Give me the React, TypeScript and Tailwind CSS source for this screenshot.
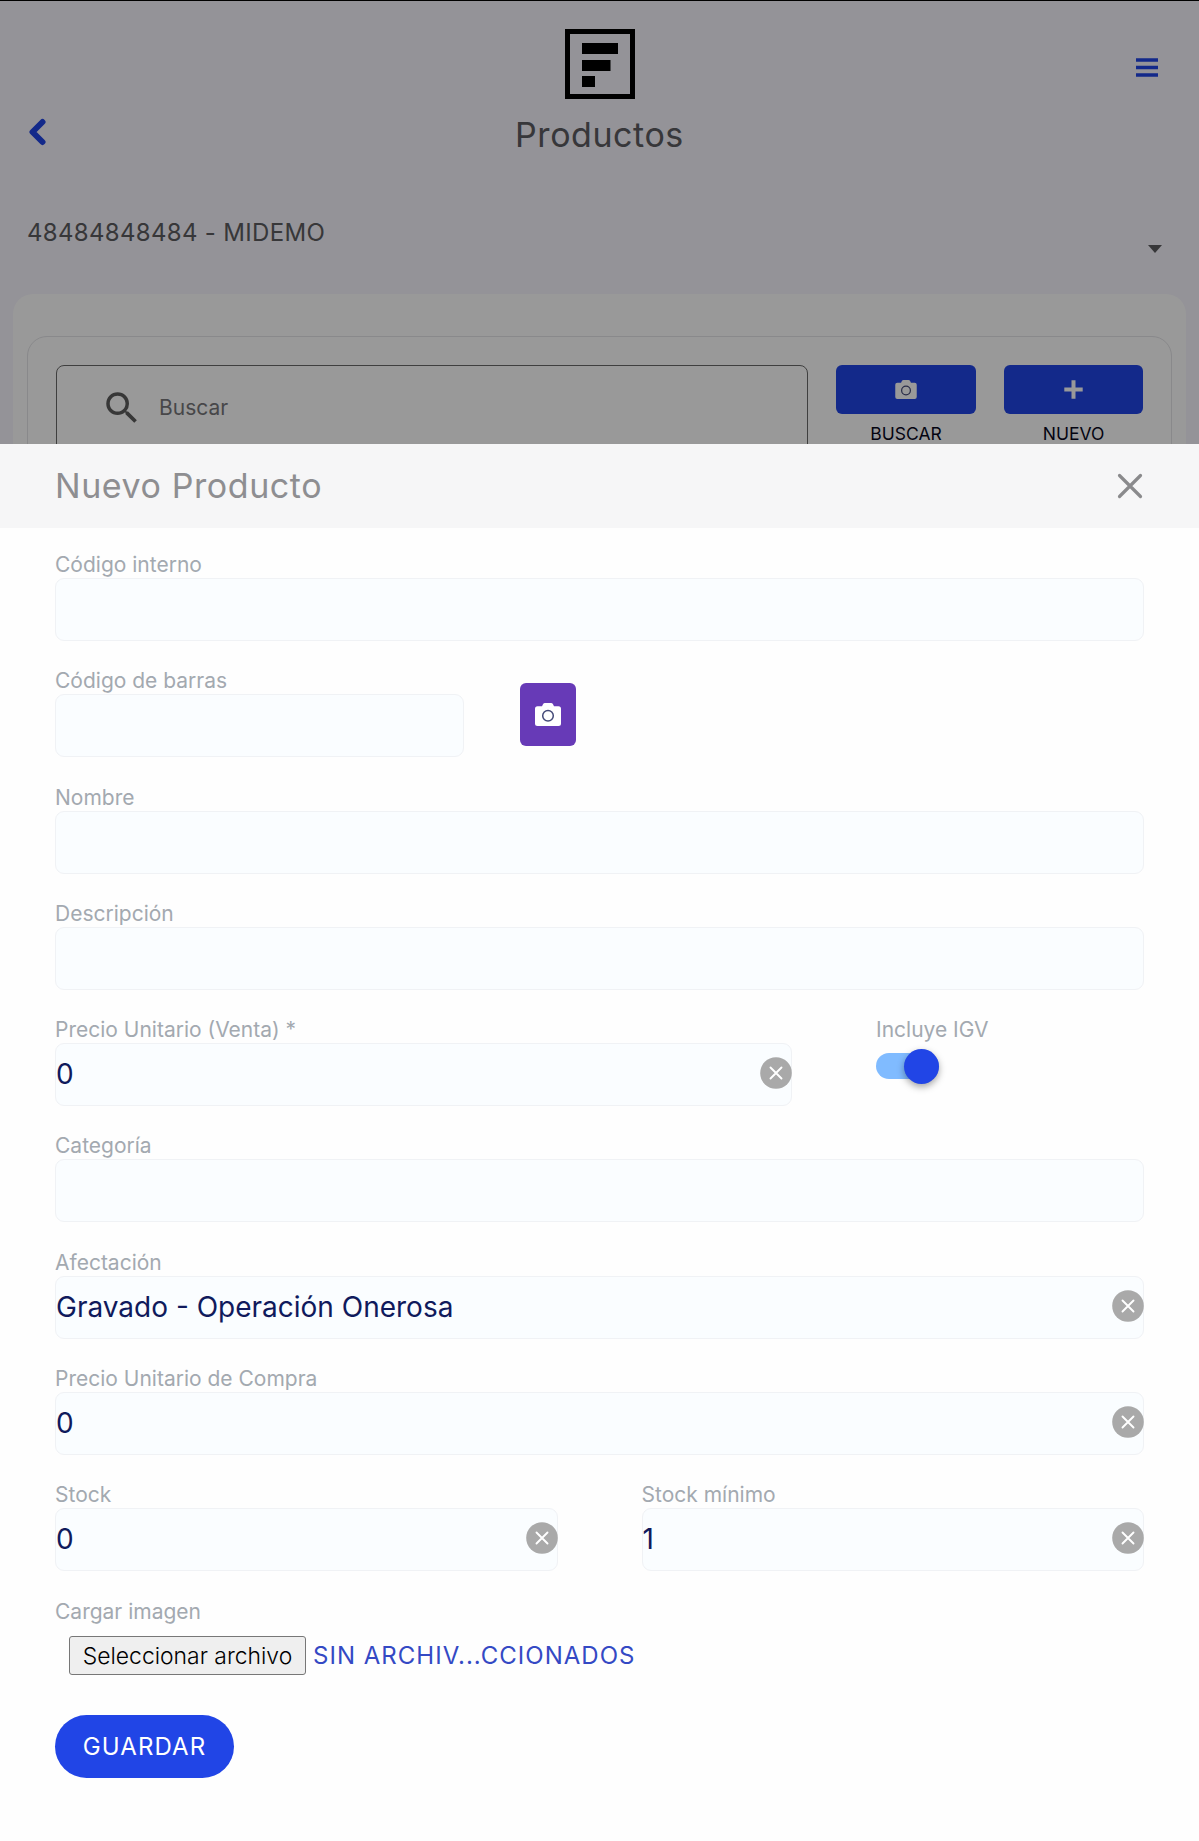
import React from "react";

type IconProps = { className?: string };

function Logo() {
  return (
    <svg className="h-[70px] w-[70px]" viewBox="0 0 70 70" fill="#000">
      <path d="M0 0H70V70H0ZM5 5V65H65V5Z" fillRule="evenodd" />
      <path d="M17 14H53V25H17ZM17 31H45.500V42H17ZM17 47H30V58H17Z" />
    </svg>
  );
}

function BackIcon() {
  return (
    <svg className="h-[28px] w-[20px]" viewBox="0 0 20 28" fill="none" stroke="#2145e6" strokeWidth="6" strokeLinecap="round" strokeLinejoin="round">
      <path d="M14.500 4L4.500 14L14.500 24" />
    </svg>
  );
}

function MenuIcon() {
  return (
    <svg className="h-[19px] w-[22px]" viewBox="0 0 22 19" fill="#2145e6">
      <path d="M0 0.300H22V3.700H0ZM0 7.800H22V11.200H0ZM0 15.300H22V18.700H0Z" />
    </svg>
  );
}

function CameraIcon({ className }: IconProps) {
  return (
    <svg className={className} viewBox="0 0 26 23" fill="none">
      <path d="M2.500 3.200H7L8 1.200Q8.600 0 10 0H16Q17.400 0 18 1.200L19 3.200H23.500Q26 3.200 26 5.700V20.500Q26 23 23.500 23H2.500Q0 23 0 20.500V5.700Q0 3.200 2.500 3.200Z" fill="#fff" />
      <circle cx="13" cy="12.800" r="5.300" stroke="#444a78" strokeWidth="1.500" />
    </svg>
  );
}

function PlusIcon() {
  return (
    <svg className="h-[19px] w-[19px]" viewBox="0 0 19 19" stroke="#fff" strokeWidth="4" strokeLinecap="butt">
      <path d="M9.500 0.300V18.700M0.300 9.500H18.700" />
    </svg>
  );
}

function SearchIcon() {
  return (
    <svg className="h-[42px] w-[42px]" viewBox="0 0 24 24" fill="#5c5c5c">
      <path d="M15.500 14h-.79l-.28-.27A6.471 6.471 0 0 0 16 9.500 6.500 6.500 0 1 0 9.500 16c1.610 0 3.090-.59 4.230-1.570l.27.28v.79l5 4.990L20.490 19l-4.990-5zm-6 0C7.010 14 5 11.990 5 9.500S7.010 5 9.500 5 14 7.010 14 9.500 11.990 14 9.500 14z" />
    </svg>
  );
}

function CloseIcon() {
  return (
    <svg className="h-[26px] w-[26px]" viewBox="0 0 26 26" stroke="#8a8a8c" strokeWidth="3.200" strokeLinecap="round">
      <path d="M2.500 2.500L23.500 23.500M23.500 2.500L2.500 23.500" />
    </svg>
  );
}

function ClearIcon() {
  return (
    <svg className="h-8 w-8 shrink-0" viewBox="0 0 32 32">
      <circle cx="16" cy="16" r="15.800" fill="#a9a9a9" />
      <path d="M10.500 10.500L21.500 21.500M21.500 10.500L10.500 21.500" stroke="#fff" strokeWidth="1.900" strokeLinecap="round" />
    </svg>
  );
}

function Label({ children }: { children: React.ReactNode }) {
  return <span className="block h-[28px] text-[21px] leading-[29px] whitespace-nowrap text-[#a3a9b0]">{children}</span>;
}

function Field({ label, value, className = "w-full" }: { label: string; value?: string; className?: string }) {
  return (
    <label className={`block ${className}`}>
      <Label>{label}</Label>
      <span className="flex h-[63px] items-center justify-between rounded-[9px] border border-[#f0f2f5] bg-[#fafdff] text-[28px] text-[#101a5c]">
        <span className="pb-[1px] leading-[40px]">{value}</span>
        {value && <span className="mr-[-1px] pb-[3px]"><ClearIcon /></span>}
      </span>
    </label>
  );
}

function ActionButton({ icon, text, className }: { icon: React.ReactNode; text: string; className: string }) {
  return (
    <div className={`shrink-0 text-center ${className}`}>
      <button className="flex h-[49px] w-full items-center justify-center rounded-[6px] bg-[#2145e6]">{icon}</button>
      <span className="mt-[9px] block text-[17.5px] leading-[21px] text-[#08081c]">{text}</span>
    </div>
  );
}

function ProductsPage() {
  return (
    <div className="relative h-[444px] overflow-hidden bg-[#f7f5fd]">
      <header className="grid grid-cols-3 px-[28px] pt-[29px]">
        <div className="pt-[89px]"><BackIcon /></div>
        <div className="flex flex-col items-center">
          <Logo />
          <h1 className="mt-[15px] text-[34px] leading-[42px] tracking-[0.55px] text-[#5c5c62]">Productos</h1>
        </div>
        <div className="flex justify-end pt-[29px] pr-[13px]"><MenuIcon /></div>
      </header>
      <div className="mt-[61px] flex items-start justify-between pr-[37px] pl-[27px]">
        <span className="text-[24px] leading-[32px] tracking-[0.32px] text-[#5c5c60]">48484848484 - MIDEMO</span>
        <svg className="mt-[28px] h-[8px] w-[14px]" viewBox="0 0 14 8" fill="#5c5c60"><path d="M0 0H14L7 8Z" /></svg>
      </div>
      <section className="mx-[13px] mt-[41px] h-[200px] rounded-[20px] bg-white px-[14px] pt-[42px]">
        <div className="flex h-[200px] gap-[28px] rounded-[20px] border border-[#e4e4e8] pt-[28px] pr-[28px] pl-[28px]">
          <div className="flex h-[130px] grow rounded-[8px] border-[1.500px] border-[#6a6a6a] pt-[21px] pl-[44px]">
            <SearchIcon />
            <span className="ml-[16px] text-[21px] leading-[42px] text-[#77777b]">Buscar</span>
          </div>
          <ActionButton className="w-[140px]" icon={<CameraIcon className="h-[19px] w-[22px]" />} text="BUSCAR" />
          <ActionButton className="w-[139px]" icon={<PlusIcon />} text="NUEVO" />
        </div>
      </section>
      <div className="absolute inset-0 border-t border-black bg-black/40" />
    </div>
  );
}

export default function App() {
  return (
    <main className="h-[1841px] w-[1199px] overflow-hidden bg-[#fefefe] font-['Inter',sans-serif]">
      <ProductsPage />
      <div className="flex h-[84px] items-center justify-between bg-[#f6f6f7] pr-[56px] pl-[55px]">
        <h2 className="text-[34px] leading-[42px] tracking-[0.57px] text-[#8e8e91]">Nuevo Producto</h2>
        <CloseIcon />
      </div>
      <form className="flex flex-col gap-[25.300px] px-[55px] pt-[22px]">
        <Field label="Código interno" />
        <div className="flex gap-[56px]">
          <Field label="Código de barras" className="w-[409px]" />
          <button type="button" className="mt-[17px] flex h-[63px] w-[56px] items-center justify-center rounded-[6px] bg-[#673ab7]">
            <CameraIcon className="h-[23px] w-[26px]" />
          </button>
        </div>
        <Field label="Nombre" />
        <Field label="Descripción" />
        <div className="flex gap-[84px]">
          <Field label="Precio Unitario (Venta) *" value="0" className="w-[737px]" />
          <div>
            <Label>Incluye IGV</Label>
            <div className="mt-[10px] flex h-[26px] w-[63px] items-center justify-end rounded-full bg-[#80bbff]">
              <span className="h-[35px] w-[35px] shrink-0 rounded-full bg-[#2145e6] shadow-[0_3px_7px_rgba(0,0,0,0.35)]" />
            </div>
          </div>
        </div>
        <Field label="Categoría" />
        <Field label="Afectación" value="Gravado - Operación Onerosa" />
        <Field label="Precio Unitario de Compra" value="0" />
        <div className="grid grid-cols-2 gap-[84px]">
          <Field label="Stock" value="0" />
          <Field label="Stock mínimo" value="1" />
        </div>
        <div>
          <Label>Cargar imagen</Label>
          <div className="mt-[11px] ml-[14px] flex h-[39px] items-center gap-[7px]">
            <button type="button" className="h-[39px] w-[237px] rounded-[3px] border border-[#777] bg-[#efefef] pt-[1px] text-[22.900px] leading-[37px] font-light whitespace-nowrap text-black">
              Seleccionar archivo
            </button>
            <span className="text-[24px] leading-[39px] tracking-[1.020px] text-[#3449c4]">SIN ARCHIV...CCIONADOS</span>
          </div>
          <button type="button" className="mt-[40px] h-[63px] w-[179px] rounded-full bg-[#2145e6] pt-[2px] text-[24px] tracking-[1.100px] text-white">
            GUARDAR
          </button>
        </div>
      </form>
    </main>
  );
}
